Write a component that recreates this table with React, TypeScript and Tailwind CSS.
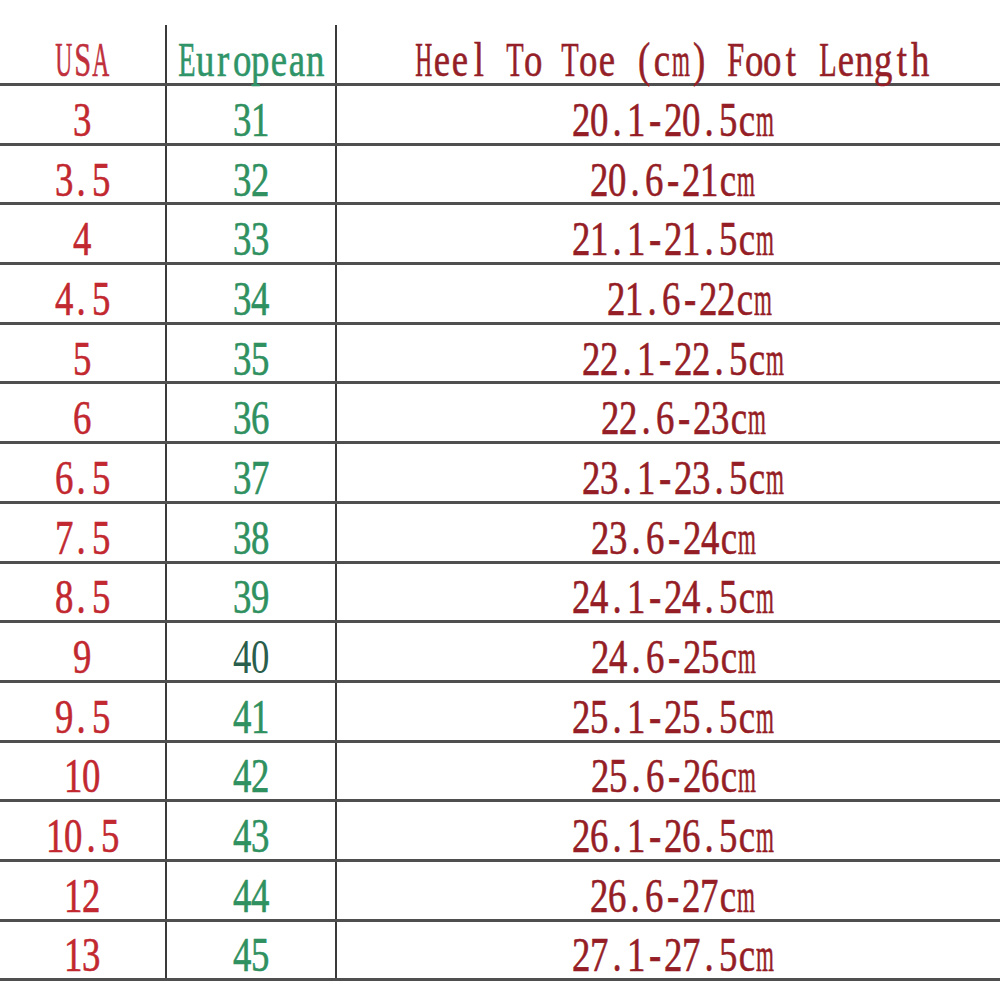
import React from "react";

// per-glyph horizontal squeeze so every character fits an 18.4px monospace cell
const squeeze: Record<string, string> = {
  m: "scale-x-[0.47]",
  H: "scale-x-[0.48]",
  U: "scale-x-[0.48]",
  A: "scale-x-[0.48]",
  T: "scale-x-[0.58]",
  L: "scale-x-[0.58]",
  E: "scale-x-[0.58]",
  F: "scale-x-[0.62]",
  S: "scale-x-[0.62]",
};

function Mono({ text }: { text: string }) {
  return (
    <span className="inline-flex">
      {[...text].map((ch, i) => (
        <span
          key={i}
          className={`inline-flex w-[18.4px] ${ch === "." ? "justify-start pl-[2px]" : "justify-center"}`}
        >
          <span className={`inline-block shrink-0 ${squeeze[ch] ?? "scale-x-[0.75]"}`}>
            {ch === " " ? "\u00a0" : ch}
          </span>
        </span>
      ))}
    </span>
  );
}

const rows = [
  { usa: "3", eu: "31", len: "20.1-20.5cm", pad: "pl-[235px]" },
  { usa: "3.5", eu: "32", len: "20.6-21cm", pad: "pl-[253px]" },
  { usa: "4", eu: "33", len: "21.1-21.5cm", pad: "pl-[235px]" },
  { usa: "4.5", eu: "34", len: "21.6-22cm", pad: "pl-[270px]" },
  { usa: "5", eu: "35", len: "22.1-22.5cm", pad: "pl-[245px]" },
  { usa: "6", eu: "36", len: "22.6-23cm", pad: "pl-[264px]" },
  { usa: "6.5", eu: "37", len: "23.1-23.5cm", pad: "pl-[245px]" },
  { usa: "7.5", eu: "38", len: "23.6-24cm", pad: "pl-[254px]" },
  { usa: "8.5", eu: "39", len: "24.1-24.5cm", pad: "pl-[235px]" },
  { usa: "9", eu: "40", len: "24.6-25cm", pad: "pl-[254px]" },
  { usa: "9.5", eu: "41", len: "25.1-25.5cm", pad: "pl-[235px]" },
  { usa: "10", eu: "42", len: "25.6-26cm", pad: "pl-[254px]" },
  { usa: "10.5", eu: "43", len: "26.1-26.5cm", pad: "pl-[235px]" },
  { usa: "12", eu: "44", len: "26.6-27cm", pad: "pl-[253px]" },
  { usa: "13", eu: "45", len: "27.1-27.5cm", pad: "pl-[235px]" },
];

export default function App() {
  return (
    <div className="w-[1000px] h-[1000px] bg-white pt-[25px] font-['Liberation_Serif',serif] text-[49px] leading-none [-webkit-text-stroke:0.6px]">
      {/* header */}
      <div className="flex h-[58px]">
        <div className="w-[167px] border-r-2 border-[#3a3a3a] flex items-center justify-center pt-[10px] text-[#c0303c]">
          <Mono text="USA" />
        </div>
        <div className="w-[170px] border-r-2 border-[#3a3a3a] flex items-center justify-center pt-[10px] text-[#2f9468]">
          <Mono text="European" />
        </div>
        <div className="flex-1 flex items-center pl-[77px] pt-[10px] text-[#951f28]">
          <Mono text="Heel To Toe (cm) Foot Length" />
        </div>
      </div>

      {rows.map((r) => (
        <div key={r.usa} className="flex h-[59.7px] border-t-[3px] border-[#4f4f4f]">
          <div className="w-[167px] border-r-2 border-[#3a3a3a] flex items-center justify-center pt-[10px] text-[#c2282f]">
            <Mono text={r.usa} />
          </div>
          <div
            className={`w-[170px] border-r-2 border-[#3a3a3a] flex items-center justify-center pt-[10px] ${
              r.eu === "40" ? "text-[#2a5e4c] [-webkit-text-stroke:0px]" : "text-[#2f9060]"
            }`}
          >
            <Mono text={r.eu} />
          </div>
          <div className={`flex-1 flex items-center pt-[10px] text-[#951e26] ${r.pad}`}>
            <Mono text={r.len} />
          </div>
        </div>
      ))}
      <div className="h-[3px] bg-[#4f4f4f]" />
    </div>
  );
}
